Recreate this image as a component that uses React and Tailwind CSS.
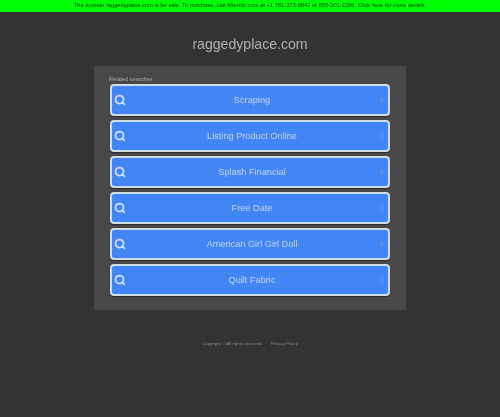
import { Search, ChevronRight } from 'lucide-react';

const searches = ['Scraping', 'Listing Product Online', 'Splash Financial', 'Free Date', 'American Girl Girl Doll', 'Quilt Fabric'];

export default function App() {
  return (
    <div className="h-[417px] w-[500px] overflow-hidden bg-[#333333] font-['Liberation_Sans',Arial,sans-serif]">
      <div className="flex h-[12px] items-center justify-center whitespace-nowrap bg-[#00ff00] text-[5.75px] leading-none text-[#0c3d0c] blur-[0.4px]">
        The domain raggedyplace.com is for sale. To purchase, call Afternic.com at +1 781-373-6847 or 855-201-2286. Click here for more details.
      </div>

      <h1 className="mt-[23px] text-center text-[14.1px] leading-[18px] text-[#b0b0b0] blur-[0.5px]">raggedyplace.com</h1>

      <div className="mx-auto mt-[13px] h-[244px] w-[312px] bg-[#484848] px-4 pt-[10px]">
        <p className="-ml-[1px] h-[8px] text-[5.6px] leading-[6px] text-[#a8a8a8] blur-[0.4px]">Related searches</p>
        <div className="flex flex-col gap-[4px]">
          {searches.map((item) => (
            <a key={item} className="relative flex h-[32px] items-center justify-center rounded-[4px] border-2 border-[#d3dbe9] bg-[#4285f4] text-[9.2px] text-[#c5d6f5] shadow-[0_1px_1px_rgba(0,0,0,0.4)]">
              <Search className="absolute left-[1.5px] top-[8px] h-[12px] w-[12px] text-[#d5e2f8] blur-[0.3px]" strokeWidth={3.5} />
              <span className="pl-[4px] pt-[2px] blur-[0.4px]">{item}</span>
              <ChevronRight className="absolute right-[1.5px] top-[9px] h-[10px] w-[10px] text-[#7a9ad0] blur-[0.3px]" strokeWidth={2.5} />
            </a>
          ))}
        </div>
      </div>

      <div className="mt-[31px] flex justify-center gap-[8px] text-[4.4px] leading-[6px] text-[#8c8c8c] blur-[0.4px]">
        <span>Copyright © All rights reserved.</span>
        <span>Privacy Policy</span>
      </div>
    </div>
  );
}
